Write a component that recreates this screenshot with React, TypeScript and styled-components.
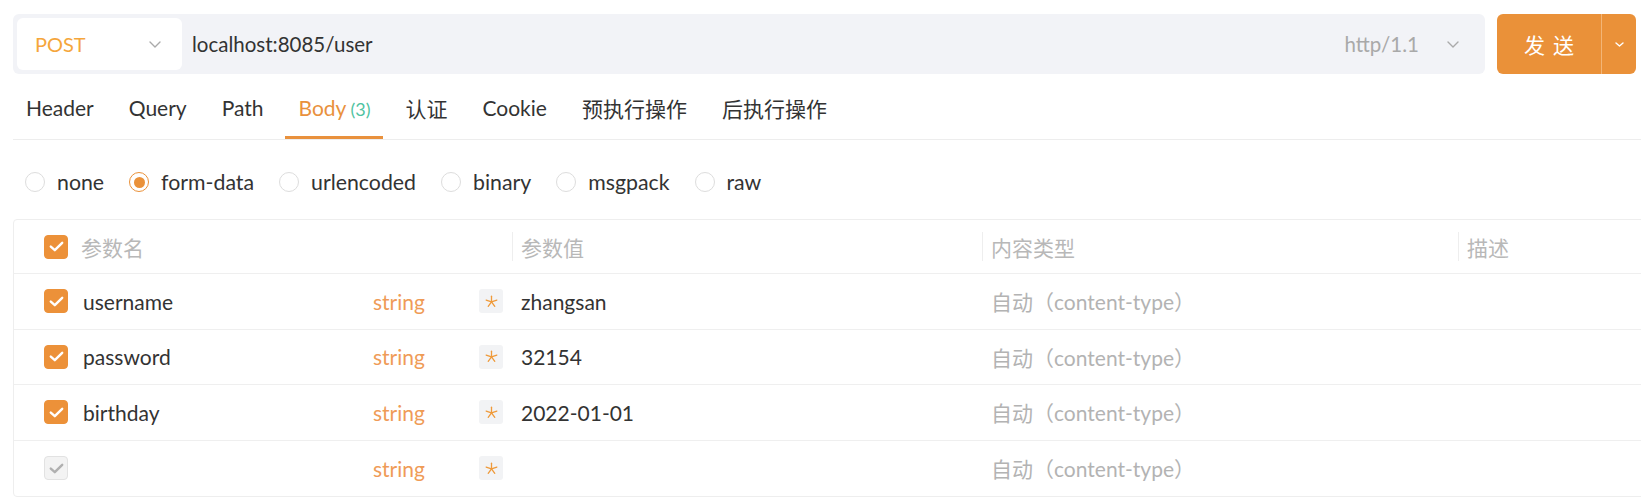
import React from "react";
import styled, { createGlobalStyle } from "styled-components";

const GlobalStyle = createGlobalStyle`
  html, body { margin: 0; padding: 0; background: #ffffff; overflow: hidden; }
  body {
    font-family: Lato, "Noto Sans CJK SC", sans-serif;
    color: #333333;
  }
  * { box-sizing: border-box; }
`;

const ORANGE = "#ea9139";

const Page = styled.div`
  width: 1641px;
  padding: 14px 0 0 13px;
`;

const TopRow = styled.div`
  display: flex;
  gap: 12px;
  height: 60px;
  margin-right: 5px;
`;

const UrlBar = styled.div`
  flex: 1;
  display: flex;
  align-items: center;
  background: #f2f3f7;
  border-radius: 6px;
  padding: 4px 26px 4px 4px;
`;

const MethodSelect = styled.div`
  width: 165px;
  height: 100%;
  background: #ffffff;
  border-radius: 6px;
  display: flex;
  align-items: center;
  justify-content: space-between;
  padding: 0 21px 0 18px;
  color: #f5a63c;
  font-size: 20px;
`;

const UrlText = styled.div`
  flex: 1;
  padding-left: 10px;
  font-size: 20.5px;
  color: #333333;
`;

const Protocol = styled.div`
  display: flex;
  align-items: center;
  gap: 28px;
  color: #a9a9a9;
  font-size: 20.5px;
`;

const SendButton = styled.div`
  width: 139px;
  display: flex;
  background: ${ORANGE};
  border-radius: 6px;
  color: #ffffff;
`;

const SendLabel = styled.div`
  flex: 1;
  display: flex;
  align-items: center;
  justify-content: center;
  font-size: 21px;
  letter-spacing: 8px;
  padding-left: 8px;
`;

const SendArrow = styled.div`
  width: 35px;
  display: flex;
  align-items: center;
  justify-content: center;
  border-left: 1px solid #f3b576;
`;

const TabBar = styled.div`
  display: flex;
  gap: 9px;
  border-bottom: 1px solid #ededed;
`;

const Tab = styled.div<{ $active?: boolean }>`
  height: 65px;
  display: flex;
  align-items: center;
  padding: 5px 13px 0;
  font-size: 21px;
  color: ${(p) => (p.$active ? "#e9913d" : "#333333")};
  border-bottom: 3px solid ${(p) => (p.$active ? "#e9913d" : "transparent")};
`;

const TabLabel = styled.span`
  white-space: nowrap;
`;

const Badge = styled.span`
  color: #4fc3a1;
  font-size: 18px;
  margin-left: 4px;
`;

const RadioRow = styled.div`
  display: flex;
  align-items: center;
  height: 79px;
  padding: 5px 0 0 12px;
  gap: 25px;
`;

const RadioItem = styled.div`
  display: flex;
  align-items: center;
  gap: 12px;
  font-size: 21.3px;
  color: #333333;
`;

const RadioCircle = styled.span<{ $checked?: boolean }>`
  width: 20px;
  height: 20px;
  border-radius: 50%;
  border: 1px solid ${(p) => (p.$checked ? ORANGE : "#dddddd")};
  display: flex;
  align-items: center;
  justify-content: center;
  &::after {
    content: "";
    width: 11px;
    height: 11px;
    border-radius: 50%;
    background: ${(p) => (p.$checked ? ORANGE : "transparent")};
  }
`;

const Table = styled.div`
  border: 1px solid #eeeeee;
  border-radius: 4px;
  margin-right: -10px;
`;

const HeaderRow = styled.div`
  display: grid;
  grid-template-columns: 498px 470px 476px 1fr;
  align-items: center;
  height: 54px;
  border-bottom: 1px solid #efefef;
`;

const HeaderCell = styled.div<{ $first?: boolean }>`
  display: flex;
  align-items: center;
  height: 29px;
  gap: 13px;
  padding-left: ${(p) => (p.$first ? "30px" : "8px")};
  border-left: ${(p) => (p.$first ? "none" : "1px solid #eeeeee")};
  color: #b8b8b8;
  font-size: 21px;
`;

const DataRow = styled.div`
  display: grid;
  grid-template-columns: 498px 470px 476px 1fr;
  align-items: center;
  height: 55.6px;
  border-bottom: 1px solid #efefef;
  &:last-child {
    border-bottom: none;
    height: 55px;
  }
`;

const NameCell = styled.div`
  display: flex;
  align-items: center;
  padding: 0 9px 0 30px;
`;

const NameText = styled.div`
  flex: 1;
  margin-left: 15px;
  font-size: 21px;
  color: #333333;
`;

const TypeText = styled.div`
  width: 96px;
  font-size: 21px;
  color: #ef9b57;
`;

const StarBox = styled.div`
  width: 24px;
  height: 24px;
  margin-left: 10px;
  border-radius: 3px;
  background: #f2f3f5;
  display: flex;
  align-items: center;
  justify-content: center;
`;

const ValueCell = styled.div`
  padding-left: 9px;
  font-size: 21px;
  color: #333333;
`;

const ContentTypeCell = styled.div`
  padding-left: 9px;
  font-size: 21px;
  color: #b3b3b3;
`;

const CheckBox = styled.span<{ $disabled?: boolean }>`
  width: 24px;
  height: 24px;
  flex: none;
  border-radius: 4px;
  display: flex;
  align-items: center;
  justify-content: center;
  background: ${(p) => (p.$disabled ? "#f3f3f3" : "#ec9139")};
  border: 1px solid ${(p) => (p.$disabled ? "#e2e2e2" : "#ec9139")};
`;

const Chevron = ({ w = 12, h = 7, color = "#aaaaaa" }: { w?: number; h?: number; color?: string }) => (
  <svg width={w} height={h} viewBox={`0 0 ${w} ${h}`} fill="none">
    <polyline
      points={`1,1 ${w / 2},${h - 1} ${w - 1},1`}
      stroke={color}
      strokeWidth="1.4"
      strokeLinecap="round"
      strokeLinejoin="round"
    />
  </svg>
);

const CheckIcon = ({ color }: { color: string }) => (
  <svg width="15" height="11" viewBox="0 0 15 11" fill="none">
    <path d="M1.8 5.6 L5.8 9.2 L13.2 1.8" stroke={color} strokeWidth="2.4" strokeLinecap="round" strokeLinejoin="round" />
  </svg>
);

const StarIcon = () => {
  const angles = [-90, -18, 54, 126, 198];
  return (
    <svg width="13" height="13" viewBox="0 0 13 13" fill="none">
      {angles.map((a) => {
        const r = (a * Math.PI) / 180;
        return (
          <line
            key={a}
            x1="6.5"
            y1="6.8"
            x2={6.5 + 5.6 * Math.cos(r)}
            y2={6.8 + 5.6 * Math.sin(r)}
            stroke="#ef9a3a"
            strokeWidth="1.3"
            strokeLinecap="round"
          />
        );
      })}
    </svg>
  );
};

const tabs = ["Header", "Query", "Path", "Body", "认证", "Cookie", "预执行操作", "后执行操作"];
const radios = ["none", "form-data", "urlencoded", "binary", "msgpack", "raw"];
const rows = [
  { name: "username", value: "zhangsan", on: true },
  { name: "password", value: "32154", on: true },
  { name: "birthday", value: "2022-01-01", on: true },
  { name: "", value: "", on: false },
];

export default function App() {
  return (
    <>
      <GlobalStyle />
      <Page>
        <TopRow>
          <UrlBar>
            <MethodSelect>
              <span>POST</span>
              <Chevron />
            </MethodSelect>
            <UrlText>localhost:8085/user</UrlText>
            <Protocol>
              <span>http/1.1</span>
              <Chevron />
            </Protocol>
          </UrlBar>
          <SendButton>
            <SendLabel>发送</SendLabel>
            <SendArrow>
              <Chevron w={9} h={5} color="#ffffff" />
            </SendArrow>
          </SendButton>
        </TopRow>

        <TabBar>
          {tabs.map((t) => (
            <Tab key={t} $active={t === "Body"}>
              <TabLabel>
                {t}
                {t === "Body" && <Badge>(3)</Badge>}
              </TabLabel>
            </Tab>
          ))}
        </TabBar>

        <RadioRow>
          {radios.map((r) => (
            <RadioItem key={r}>
              <RadioCircle $checked={r === "form-data"} />
              {r}
            </RadioItem>
          ))}
        </RadioRow>

        <Table>
          <HeaderRow>
            <HeaderCell $first>
              <CheckBox>
                <CheckIcon color="#ffffff" />
              </CheckBox>
              参数名
            </HeaderCell>
            <HeaderCell>参数值</HeaderCell>
            <HeaderCell>内容类型</HeaderCell>
            <HeaderCell>描述</HeaderCell>
          </HeaderRow>
          {rows.map((row, i) => (
            <DataRow key={i}>
              <NameCell>
                <CheckBox $disabled={!row.on}>
                  <CheckIcon color={row.on ? "#ffffff" : "#b0b0b0"} />
                </CheckBox>
                <NameText>{row.name}</NameText>
                <TypeText>string</TypeText>
                <StarBox>
                  <StarIcon />
                </StarBox>
              </NameCell>
              <ValueCell>{row.value}</ValueCell>
              <ContentTypeCell>自动（content-type）</ContentTypeCell>
              <div />
            </DataRow>
          ))}
        </Table>
      </Page>
    </>
  );
}
